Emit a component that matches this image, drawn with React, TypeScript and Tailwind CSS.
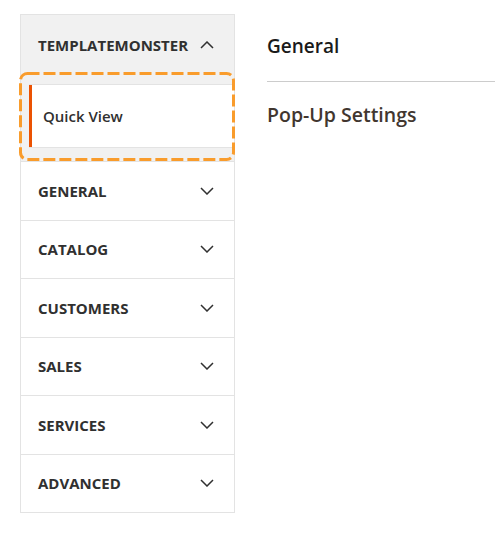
import React from "react";

const Chevron = ({ up = false }: { up?: boolean }) => (
  <svg width="14" height="8" viewBox="0 0 14 8" className="block">
    <polyline
      points={up ? "1,7 7,1 13,7" : "1,1 7,7 13,1"}
      fill="none"
      stroke="#303030"
      strokeWidth="1.5"
    />
  </svg>
);

const rows = ["GENERAL", "CATALOG", "CUSTOMERS", "SALES", "SERVICES", "ADVANCED"];

export default function App() {
  return (
    <div
      className="w-[495px] h-[534px] bg-white flex pl-5 pt-[14px]"
      style={{ fontFamily: '"Open Sans", sans-serif' }}
    >
      <div className="relative w-[215px] shrink-0 self-start border border-[#e3e3e3]">
        <div className="bg-[#f1f1f1] pb-[13px]">
          <div className="flex items-center justify-between pl-[17px] pr-5 pt-5 pb-[29px] leading-5">
            <span className="text-[15px] font-bold text-[#303030]">TEMPLATEMONSTER</span>
            <Chevron up />
          </div>
          <div className="ml-2 flex bg-white border-y border-[#e3e3e3] h-[64px]">
            <div className="w-[3px] bg-[#eb5202]" />
            <div className="flex items-center pl-[11px] text-[15px] font-semibold text-[#303030]">
              Quick View
            </div>
          </div>
        </div>
        {rows.map((r) => (
          <div
            key={r}
            className="flex items-center justify-between h-[58.5px] border-t border-[#e3e3e3] pl-[17px] pr-5"
          >
            <span className="text-[15px] font-bold text-[#303030]">{r}</span>
            <Chevron />
          </div>
        ))}
        <svg
          className="absolute left-[-2px] top-[57px] pointer-events-none"
          width="216"
          height="89"
          viewBox="0 0 216 89"
        >
          <rect
            x="1.5"
            y="1.5"
            width="213"
            height="86"
            rx="7"
            fill="none"
            stroke="#f99c2c"
            strokeWidth="3"
            strokeDasharray="12 4"
          />
        </svg>
      </div>
      <div className="ml-8 flex-1 flex flex-col">
        <div className="mt-[18px] pb-[21px] border-b border-[#cccccc] text-[19px] leading-[28px] font-semibold text-[#1a1a1a]">
          General
        </div>
        <div className="mt-[19px] text-[19.5px] leading-[28px] font-semibold text-[#41362f]">
          Pop-Up Settings
        </div>
      </div>
    </div>
  );
}
